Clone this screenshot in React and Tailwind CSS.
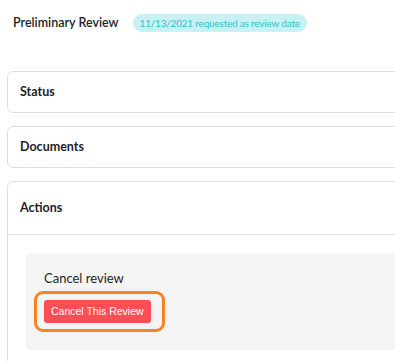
export default function App() {
  return (
    <div className="h-[361px] w-[395px] overflow-hidden bg-white font-['Lato',sans-serif] text-[#1f2328]">
      <div className="flex items-center pl-[13px] pt-[14px]">
        <h1 className="text-[12.5px] font-semibold leading-[18px]">Preliminary Review</h1>
        <span className="ml-[14px] rounded-full bg-[#c8f1f3] px-[7px] text-[10px] leading-[18px] tracking-[-0.2px] text-[#2ec3cb]">
          11/13/2021 requested as review date
        </span>
      </div>

      <div className="ml-[7px] mt-[39px] flex w-[460px] flex-col gap-[13px]">
        <div className="flex h-[42px] items-center rounded-[6px] border border-[#dedede] px-[12px]">
          <p className="text-[12.5px] font-bold">Status</p>
        </div>
        <div className="flex h-[42px] items-center rounded-[6px] border border-[#dedede] px-[12px]">
          <p className="text-[12.5px] font-bold">Documents</p>
        </div>
        <div className="rounded-[6px] border border-[#dedede]">
          <div className="flex h-[53px] items-center border-b border-[#dedede] px-[12px]">
            <p className="text-[12.5px] font-bold">Actions</p>
          </div>
          <div className="px-[18px] pb-[17px] pt-[18px]">
            <div className="rounded-[5px] bg-[#f4f4f4] px-[18px] pb-[18px] pt-[17px]">
              <p className="text-[13px] leading-[16px]">Cancel review</p>
              <div className="-ml-[10px] mt-[5px] inline-block rounded-[9px] border-[3px] border-[#fb8125] py-[6px] pl-[7px] pr-[11px]">
                <button className="block rounded-[3px] bg-[#fc4f55] px-[7px] py-[4px] font-['Liberation_Sans',Arial,sans-serif] text-[10.5px] leading-[15px] text-white">
                  Cancel This Review
                </button>
              </div>
            </div>
          </div>
        </div>
      </div>
    </div>
  );
}
